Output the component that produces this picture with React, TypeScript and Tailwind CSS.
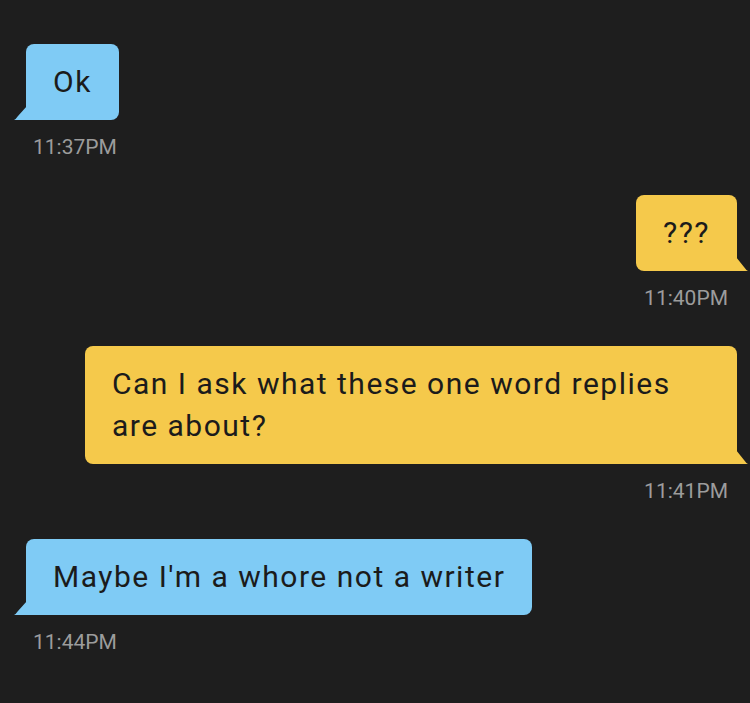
import React from 'react';

type Side = 'left' | 'right';

interface Message {
  side: Side;
  lines: string[];
  time: string;
  width?: string;
}

const messages: Message[] = [
  { side: 'left', lines: ['Ok'], time: '11:37PM' },
  { side: 'right', lines: ['???'], time: '11:40PM' },
  {
    side: 'right',
    lines: ['Can I ask what these one word replies', 'are about?'],
    time: '11:41PM',
    width: 'w-[652px]',
  },
  { side: 'left', lines: ["Maybe I'm a whore not a writer"], time: '11:44PM' },
];

function Tail({ side }: { side: Side }) {
  if (side === 'left') {
    return (
      <svg
        className="absolute bottom-0 -left-[12px]"
        width="13"
        height="14"
        viewBox="0 0 13 14"
      >
        <path d="M13 0 L13 14 L0 14 Q2 13 4 10 Z" fill="#7fcbf5" />
      </svg>
    );
  }
  return (
    <svg
      className="absolute bottom-0 -right-[11px]"
      width="12"
      height="14"
      viewBox="0 0 12 14"
    >
      <path d="M0 0 L0 14 L12 14 Q10 13 8 10 Z" fill="#f5c94b" />
    </svg>
  );
}

function Bubble({ msg, first }: { msg: Message; first: boolean }) {
  const isLeft = msg.side === 'left';
  return (
    <div
      className={`flex flex-col ${isLeft ? 'items-start pl-[26px]' : 'items-end pr-[13px]'} ${
        first ? 'mt-[44px]' : 'mt-[36px]'
      }`}
    >
      <div
        className={`relative rounded-[8px] px-[27px] py-[17px] text-[30px] leading-[42px] tracking-[1.5px] text-[#1b1b1b] ${
          isLeft ? 'bg-[#7fcbf5] rounded-bl-none' : 'bg-[#f5c94b] rounded-br-none'
        } ${msg.width ?? ''}`}
      >
        {msg.lines.map((line, i) => (
          <div key={i} className="whitespace-nowrap">
            {line}
          </div>
        ))}
        <Tail side={msg.side} />
      </div>
      <div
        className={`mt-[15px] text-[21px] leading-[24px] text-[#9c9c9c] ${
          isLeft ? 'ml-[7px]' : 'mr-[9px]'
        }`}
      >
        {msg.time}
      </div>
    </div>
  );
}

export default function App() {
  return (
    <div
      className="w-[750px] h-[703px] overflow-hidden bg-[#1e1e1e]"
      style={{ fontFamily: 'Roboto, "Noto Sans", sans-serif' }}
    >
      {messages.map((m, i) => (
        <Bubble key={i} msg={m} first={i === 0} />
      ))}
    </div>
  );
}
